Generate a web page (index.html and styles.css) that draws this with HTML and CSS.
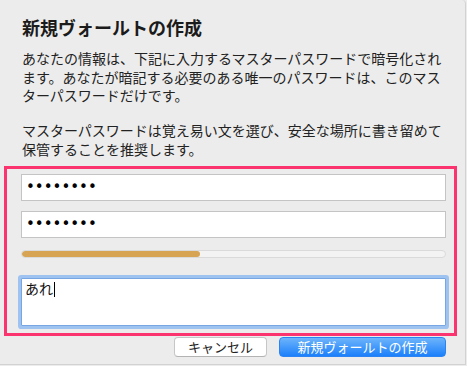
FILE: index.html
```html
<!DOCTYPE html>
<html lang="ja">
<head>
<meta charset="utf-8">
<title>新規ヴォールトの作成</title>
<link rel="stylesheet" href="styles.css">
</head>
<body>
<div class="window">
  <h1 class="title">新規ヴォールトの作成</h1>
  <p class="desc">あなたの情報は、下記に入力するマスターパスワードで暗号化されます。あなたが暗記する必要のある唯一のパスワードは、このマスターパスワードだけです。</p>
  <p class="desc desc-second">マスターパスワードは覚え易い文を選び、安全な場所に書き留めて保管することを推奨します。</p>
  <div class="highlight">
    <div class="field"><span class="dots">••••••••</span></div>
    <div class="field field-second"><span class="dots">••••••••</span></div>
    <div class="meter"><div class="meter-fill" style="width:42%"></div></div>
    <div class="hint">あれ<span class="caret"></span></div>
  </div>
  <div class="actions">
    <button class="btn btn-cancel">キャンセル</button>
    <button class="btn btn-primary">新規ヴォールトの作成</button>
  </div>
</div>
</body>
</html>
```
FILE: styles.css
```css
* {
  box-sizing: border-box;
}

html, body {
  margin: 0;
  padding: 0;
  background: #ececec;
}

body {
  font-family: "Noto Sans CJK JP", "Noto Sans", sans-serif;
  color: #222;
}

.window {
  width: 466px;
  height: 365px;
  background: #ececec;
  border-right: 1px solid #d2d2d2;
  border-bottom: 1px solid #d2d2d2;
  border-top-right-radius: 4px;
  padding-top: 16px;
}

.title {
  margin: 0 0 0 22px;
  font-size: 18px;
  line-height: 22px;
  font-weight: bold;
  color: #1b1b1b;
}

.desc {
  margin: 11px 0 0 22px;
  width: 422px;
  font-size: 14px;
  line-height: 18.5px;
  color: #222;
}

.desc-second {
  margin-top: 16.5px;
}

.highlight {
  margin: 8px 0 0 4px;
  width: 453px;
  border: 3px solid #fb3470;
  padding: 5px 8px 7px 14px;
  display: flex;
  flex-direction: column;
}

.field {
  height: 27px;
  background: #fff;
  border: 1px solid #c4c4c4;
  padding-left: 4px;
  display: flex;
  align-items: center;
}

.field-second {
  margin-top: 10px;
}

.dots {
  font-family: "DejaVu Sans", sans-serif;
  font-size: 15px;
  line-height: 1;
  color: #000;
}

.meter {
  margin-top: 12px;
  height: 8px;
  border-radius: 4px;
  background: #f3f3f3;
  border: 1px solid #dadada;
  overflow: hidden;
}

.meter-fill {
  height: 100%;
  background: #d6a452;
  border-radius: 4px;
}

.hint {
  margin-top: 20px;
  height: 48px;
  background: #fff;
  border: 1px solid #78a6e2;
  box-shadow: 0 0 0 3px #9fc3f1;
  border-radius: 1px;
  padding: 0 0 0 3px;
  font-size: 14px;
  line-height: 18.5px;
  color: #111;
  display: flex;
  align-items: flex-start;
}

.caret {
  display: inline-block;
  width: 1px;
  height: 15px;
  background: #000;
  margin-top: 3px;
  margin-left: 1px;
}

.actions {
  margin-top: 1px;
  padding-right: 19px;
  display: flex;
  justify-content: flex-end;
  gap: 12px;
}

.btn {
  height: 20px;
  border-radius: 4px;
  font-family: "Noto Sans CJK JP", "Noto Sans", sans-serif;
  font-size: 13px;
  line-height: 18px;
  padding: 0;
  margin: 0;
}

.btn-cancel {
  width: 93px;
  background: #fff;
  border: 1px solid #c6c6c6;
  border-bottom-color: #b3b3b3;
  color: #222;
}

.btn-primary {
  width: 167px;
  background: linear-gradient(#6db4fb, #1c80fb);
  border: 1px solid #2b84f2;
  color: #fff;
}
```
